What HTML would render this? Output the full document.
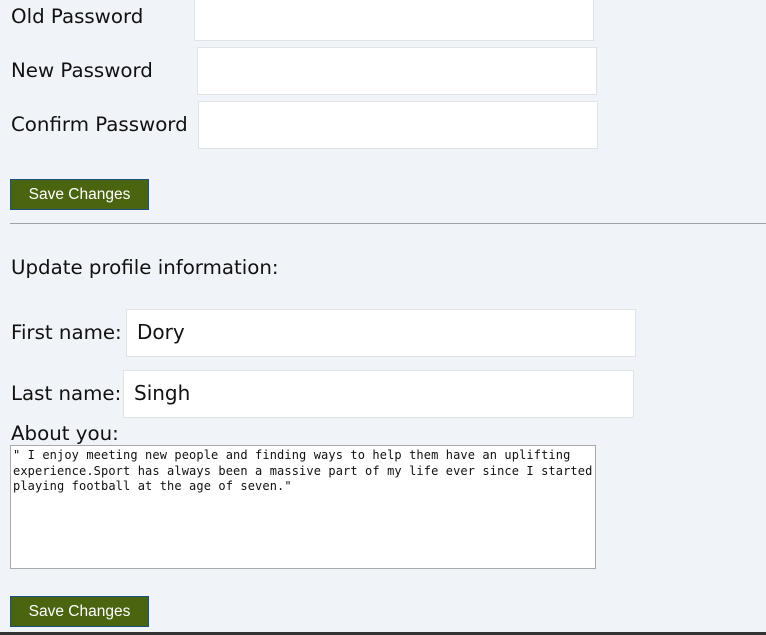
<!DOCTYPE html>
<html><head><style>
body{margin:0;width:766px;height:635px;background:#f0f4f8;position:relative;overflow:hidden;font-family:"DejaVu Sans","Liberation Sans",sans-serif;color:#111}
.l{position:absolute;font-size:19.8px;line-height:22px;left:11px}
.i{position:absolute;background:#fff;border:1px solid #dfe3e6;box-sizing:border-box;font-size:20px;padding-left:10px;line-height:44px}
.b{position:absolute;left:10px;width:139px;height:31px;box-sizing:border-box;background:#4a6410;border:1px solid #1d4f80;color:#fff;font-family:"Liberation Sans",sans-serif;font-size:15.5px;text-align:center;line-height:29px}
</style></head><body>
<div class="l" style="top:6px">Old Password</div>
<div class="i" style="left:194px;top:-8px;width:400px;height:49px"></div>
<div class="l" style="top:60px">New Password</div>
<div class="i" style="left:197px;top:47px;width:400px;height:48px"></div>
<div class="l" style="top:114px">Confirm Password</div>
<div class="i" style="left:198px;top:101px;width:400px;height:48px"></div>
<div class="b" style="top:179px">Save Changes</div>
<div style="position:absolute;left:10px;right:0;top:223px;height:1px;background:#a0a3a6"></div>
<div class="l" style="top:257px">Update profile information:</div>
<div class="l" style="top:322px">First name:</div>
<div class="i" style="left:126px;top:309px;width:510px;height:48px">Dory</div>
<div class="l" style="top:383px">Last name:</div>
<div class="i" style="left:123px;top:370px;width:511px;height:48px">Singh</div>
<div class="l" style="top:423px">About you:</div>
<div style="position:absolute;left:10px;top:445px;width:586px;height:124px;box-sizing:border-box;background:#fff;border:1px solid #a9a9a9;font-family:'DejaVu Sans Mono','Liberation Mono',monospace;font-size:12px;letter-spacing:0.11px;line-height:15.5px;padding:2px 2px;white-space:pre">" I enjoy meeting new people and finding ways to help them have an uplifting
experience.Sport has always been a massive part of my life ever since I started
playing football at the age of seven."</div>
<div class="b" style="top:596px">Save Changes</div>
<div style="position:absolute;left:0;right:0;top:632px;height:3px;background:#333"></div>
</body></html>
